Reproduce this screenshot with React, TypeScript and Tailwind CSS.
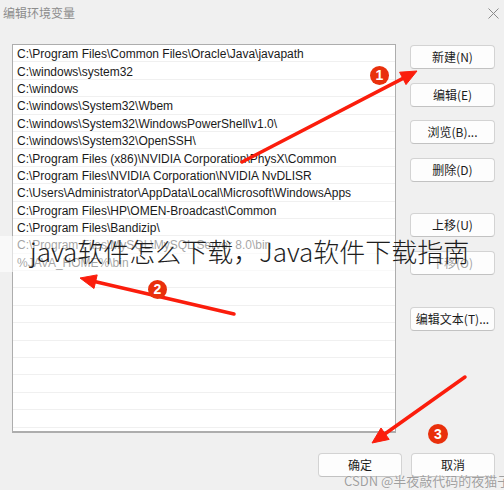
import React from "react";

const rows = [
  "C:\\Program Files\\Common Files\\Oracle\\Java\\javapath",
  "C:\\windows\\system32",
  "C:\\windows",
  "C:\\windows\\System32\\Wbem",
  "C:\\windows\\System32\\WindowsPowerShell\\v1.0\\",
  "C:\\windows\\System32\\OpenSSH\\",
  "C:\\Program Files (x86)\\NVIDIA Corporation\\PhysX\\Common",
  "C:\\Program Files\\NVIDIA Corporation\\NVIDIA NvDLISR",
  "C:\\Users\\Administrator\\AppData\\Local\\Microsoft\\WindowsApps",
  "C:\\Program Files\\HP\\OMEN-Broadcast\\Common",
  "C:\\Program Files\\Bandizip\\",
  "C:\\Program Files\\MySQL\\MySQL Server 8.0\\bin",
  "%JAVA_HOME%\\bin",
];

const cjk = { fontFamily: '"Noto Sans CJK SC", "Noto Sans", sans-serif' };

function Btn({ label, className = "", dim = false, w = "w-[85px]" }: { label: string; className?: string; dim?: boolean; w?: string }) {
  return (
    <div
      style={cjk}
      className={`flex h-[24px] ${w} items-center justify-center rounded-[4px] border border-[#d3d3d3] border-b-[#c2c2c2] bg-[#fdfdfd] text-[12px] ${dim ? "text-[#a3a3a3]" : "text-[#1b1b1b]"} ${className}`}
    >
      {label}
    </div>
  );
}

export default function App() {
  const totalRows = 22;
  return (
    <div className="relative h-[490px] w-[504px] overflow-hidden bg-[#f0f0f0]">
      {/* title bar */}
      <div className="flex h-[26px] items-center justify-between pl-[3px] pr-[5px]">
        <span style={cjk} className="text-[12px] text-[#8c8c8c]">编辑环境变量</span>
        <svg width="11" height="11" viewBox="0 0 11 11">
          <path d="M0.5 0.5 L10.5 10.5 M10.5 0.5 L0.5 10.5" stroke="#8a8a8a" strokeWidth="1" />
        </svg>
      </div>

      {/* main */}
      <div className="flex pl-[12px] pt-[18px]">
        <div className="h-[389px] w-[384px] overflow-hidden border border-b-2 border-[#adadad] bg-white">
          {Array.from({ length: totalRows }).map((_, i) => (
            <div
              key={i}
              style={{ fontFamily: '"Liberation Sans", Arial, sans-serif' }}
              className="flex h-[17.4px] items-center border-b border-[#f0f0f0] pl-[4px] pt-[2px] text-[12px] leading-none text-[#1a1a1a]"
            >
              {rows[i] ?? ""}
            </div>
          ))}
        </div>
        <div className="ml-[14px] flex flex-col pt-[1px]">
          <Btn label="新建(N)" />
          <Btn label="编辑(E)" className="mt-[14px]" />
          <Btn label="浏览(B)..." className="mt-[13px]" />
          <Btn label="删除(D)" className="mt-[14px]" />
          <Btn label="上移(U)" className="mt-[31px]" />
          <Btn label="下移(O)" className="mt-[14px]" dim />
          <Btn label="编辑文本(T)..." className="mt-[32px]" />
        </div>
      </div>

      {/* bottom buttons */}
      <div className="flex justify-end gap-[9px] pr-[9px] pt-[20px]">
        <Btn label="确定" w="w-[84px]" />
        <Btn label="取消" w="w-[84px]" />
      </div>

      {/* white band overlay */}
      <div className="absolute left-0 top-[236px] h-[36px] w-[395px] bg-white/60" />

      {/* heading text */}
      <div
        style={cjk}
        className="absolute left-[30px] top-[233px] whitespace-nowrap text-[26px] font-light leading-[36px] text-[#1e1e1e]"
      >
        java软件怎么下载，Java软件下载指南
      </div>

      {/* arrows */}
      <svg className="pointer-events-none absolute left-0 top-0" width="504" height="490" viewBox="0 0 504 490">
        <g fill="#fb1d0c" stroke="#fb1d0c">
          <line x1="242" y1="162" x2="403" y2="78.4" strokeWidth="3.5" strokeLinecap="round" />
          <polygon points="417,71 406,84.6 399.6,72.2" strokeWidth="1" strokeLinejoin="round" />
          <line x1="234" y1="314" x2="95.6" y2="281.7" strokeWidth="3.5" strokeLinecap="round" />
          <polygon points="80,278 97.2,274.9 94,288.5" strokeWidth="1" strokeLinejoin="round" />
          <line x1="465" y1="377" x2="385.1" y2="433.7" strokeWidth="3.5" strokeLinecap="round" />
          <polygon points="372,443 381,428 389.2,439.4" strokeWidth="1" strokeLinejoin="round" />
        </g>
      </svg>

      {/* number badges */}
      <div style={{ fontFamily: '"Liberation Sans", Arial, sans-serif' }} className="absolute left-[370px] top-[66px] flex h-[19px] w-[19px] items-center justify-center rounded-full bg-[#e9300c] text-[14px] font-bold text-white">1</div>
      <div style={{ fontFamily: '"Liberation Sans", Arial, sans-serif' }} className="absolute left-[148px] top-[280px] flex h-[19px] w-[19px] items-center justify-center rounded-full bg-[#e9300c] text-[14px] font-bold text-white">2</div>
      <div style={{ fontFamily: '"Liberation Sans", Arial, sans-serif' }} className="absolute left-[428px] top-[424px] flex h-[20px] w-[20px] items-center justify-center rounded-full bg-[#e9300c] text-[14px] font-bold text-white">3</div>

      {/* watermark */}
      <div
        style={{ fontFamily: '"Noto Sans CJK SC", "Liberation Sans", sans-serif', textShadow: "0 0 1px #ffffff" }}
        className="absolute left-[344px] top-[473px] whitespace-nowrap text-[13px] leading-[16px] text-[#9f9f9f]"
      >
        CSDN @半夜敲代码的夜猫子
      </div>
    </div>
  );
}
